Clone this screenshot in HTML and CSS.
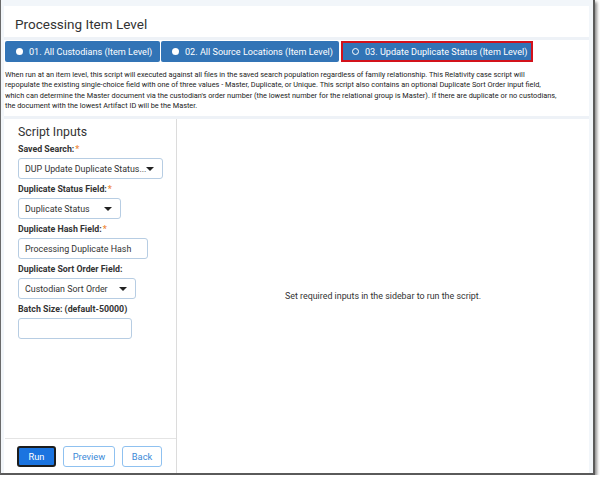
FILE: index.html
```html
<!DOCTYPE html>
<html>
<head>
<meta charset="utf-8">
<link rel="stylesheet" href="styles.css">
</head>
<body>
<div class="window">
  <div class="card">
    <header class="header">Processing Item Level</header>
    <nav class="tabs">
      <div class="tab"><span class="dot"></span>01. All Custodians (Item Level)</div>
      <div class="tab"><span class="dot"></span>02. All Source Locations (Item Level)</div>
      <div class="tab active"><span class="dot ring"></span>03. Update Duplicate Status (Item Level)</div>
    </nav>
    <p class="desc">When run at an item level, this script will executed against all files in the saved search population regardless of family relationship. This Relativity case script will<br>repopulate the existing single-choice field with one of three values - Master, Duplicate, or Unique. This script also contains an optional Duplicate Sort Order input field,<br>which can determine the Master document via the custodian's order number (the lowest number for the relational group is Master). If there are duplicate or no custodians,<br>the document with the lowest Artifact ID will be the Master.</p>
    <div class="body">
      <aside class="sidebar">
        <div class="inputs">
          <h2 class="side-title">Script Inputs</h2>
          <label class="lbl">Saved Search:<span class="req">*</span></label>
          <div class="field sel w1"><span>DUP Update Duplicate Status...</span><i class="caret"></i></div>
          <label class="lbl">Duplicate Status Field:<span class="req">*</span></label>
          <div class="field sel w2"><span>Duplicate Status</span><i class="caret"></i></div>
          <label class="lbl">Duplicate Hash Field:<span class="req">*</span></label>
          <div class="field w3"><span>Processing Duplicate Hash</span></div>
          <label class="lbl">Duplicate Sort Order Field:</label>
          <div class="field sel w4"><span>Custodian Sort Order</span><i class="caret"></i></div>
          <label class="lbl">Batch Size: (default-50000)</label>
          <div class="field w5"></div>
        </div>
        <div class="actions">
          <button class="btn run">Run</button>
          <button class="btn outline">Preview</button>
          <button class="btn outline">Back</button>
        </div>
      </aside>
      <main class="main">Set required inputs in the sidebar to run the script.</main>
    </div>
  </div>
</div>
</body>
</html>
```

FILE: styles.css
```css
* { box-sizing: border-box; }
html, body { margin: 0; padding: 0; background: #fff; }
body { font-family: Roboto, "Liberation Sans", sans-serif; color: #333; }

.window {
  width: 595px;
  height: 475px;
  border-left: 1px solid #6a6a6a;
  border-right: 2px solid #5a5a5a;
  border-bottom: 2px solid #5a5a5a;
  box-shadow: 2px 2px 3px rgba(0,0,0,0.45);
  background: #f2f6fa;
  padding: 6px 4px 0 3px;
}

.card {
  background: #fff;
  height: 100%;
  display: flex;
  flex-direction: column;
}

.header {
  height: 34px;
  flex: none;
  padding: 10px 0 0 11px;
  font-size: 13.5px;
  line-height: 16px;
  color: #333;
  border-bottom: 3px solid #eef2f7;
}

.tabs {
  display: flex;
  gap: 1px;
  padding: 0 0 0 1px;
  margin-top: 1px;
  flex: none;
}
.tab {
  height: 21px;
  background: #3274b6;
  color: #fff;
  font-size: 9.1px;
  white-space: nowrap;
  display: flex;
  align-items: center;
  padding: 0 0 0 11px;
  border-radius: 2px;
}
.tab:first-child { width: 155px; }
.tab:nth-child(2) { width: 178px; }
.tab.active {
  width: 192px;
  margin-left: 1px;
  border: 2px solid #d3121b;
  border-radius: 0;
  padding-left: 9px;
}
.dot {
  width: 7px;
  height: 7px;
  border-radius: 50%;
  background: #fff;
  margin-right: 6px;
  flex: none;
}
.dot.ring {
  background: #3274b6;
  border: 1.5px solid #fff;
}

.desc {
  margin: 8px 0 0 1px;
  font-size: 7.35px;
  line-height: 10.4px;
  white-space: nowrap;
  color: #222;
  height: 46px;
  flex: none;
}

.body {
  flex: 1;
  display: flex;
  border-top: 3px solid #eef2f7;
  min-height: 0;
}

.sidebar {
  width: 172px;
  border-right: 1px solid #dcdcdc;
  display: flex;
  flex-direction: column;
  margin-left: 1px;
}
.inputs {
  flex: 1;
  padding: 5px 0 0 13px;
  border-bottom: 1px solid #e4e4e4;
}
.side-title {
  margin: 0 0 4px 0;
  font-weight: normal;
  font-size: 12.3px;
  line-height: 16px;
  color: #333;
}
.lbl {
  display: block;
  font-weight: bold;
  font-size: 8.8px;
  line-height: 11px;
  color: #333;
  margin-bottom: 3px;
  white-space: nowrap;
}
.req { color: #ef8a3c; margin-left: 1px; }

.field {
  height: 21px;
  border: 1px solid #b7cde3;
  border-radius: 3px;
  font-size: 8.9px;
  color: #333;
  display: flex;
  align-items: center;
  padding: 0 6px;
  margin-bottom: 5px;
  white-space: nowrap;
  overflow: hidden;
}
.field.sel { justify-content: space-between; padding-right: 8px; }
.w1 { width: 145px; }
.w2 { width: 103px; }
.w3 { width: 130px; }
.w4 { width: 118px; }
.w5 { width: 114px; }
.caret {
  width: 0;
  height: 0;
  flex: none;
  border-left: 4px solid transparent;
  border-right: 4px solid transparent;
  border-top: 4px solid #222;
}

.actions {
  height: 34px;
  display: flex;
  gap: 7px;
  padding: 7px 0 0 12px;
}
.btn {
  font-family: Roboto, "Liberation Sans", sans-serif;
  font-size: 9.3px;
  height: 21px;
  border-radius: 3px;
  padding: 0;
  background: #fff;
}
.btn.run {
  width: 39px;
  background: #1b74e0;
  color: #fff;
  border: 2px solid #1d1d1d;
}
.btn.outline {
  border: 1px solid #8fc1f0;
  color: #3c8ad8;
}
.btn.outline:nth-child(2) { width: 52px; }
.btn.outline:nth-child(3) { width: 40px; }

.main {
  flex: 1;
  display: flex;
  align-items: center;
  justify-content: center;
  font-size: 8.9px;
  color: #333;
  padding-top: 0;
}
```
